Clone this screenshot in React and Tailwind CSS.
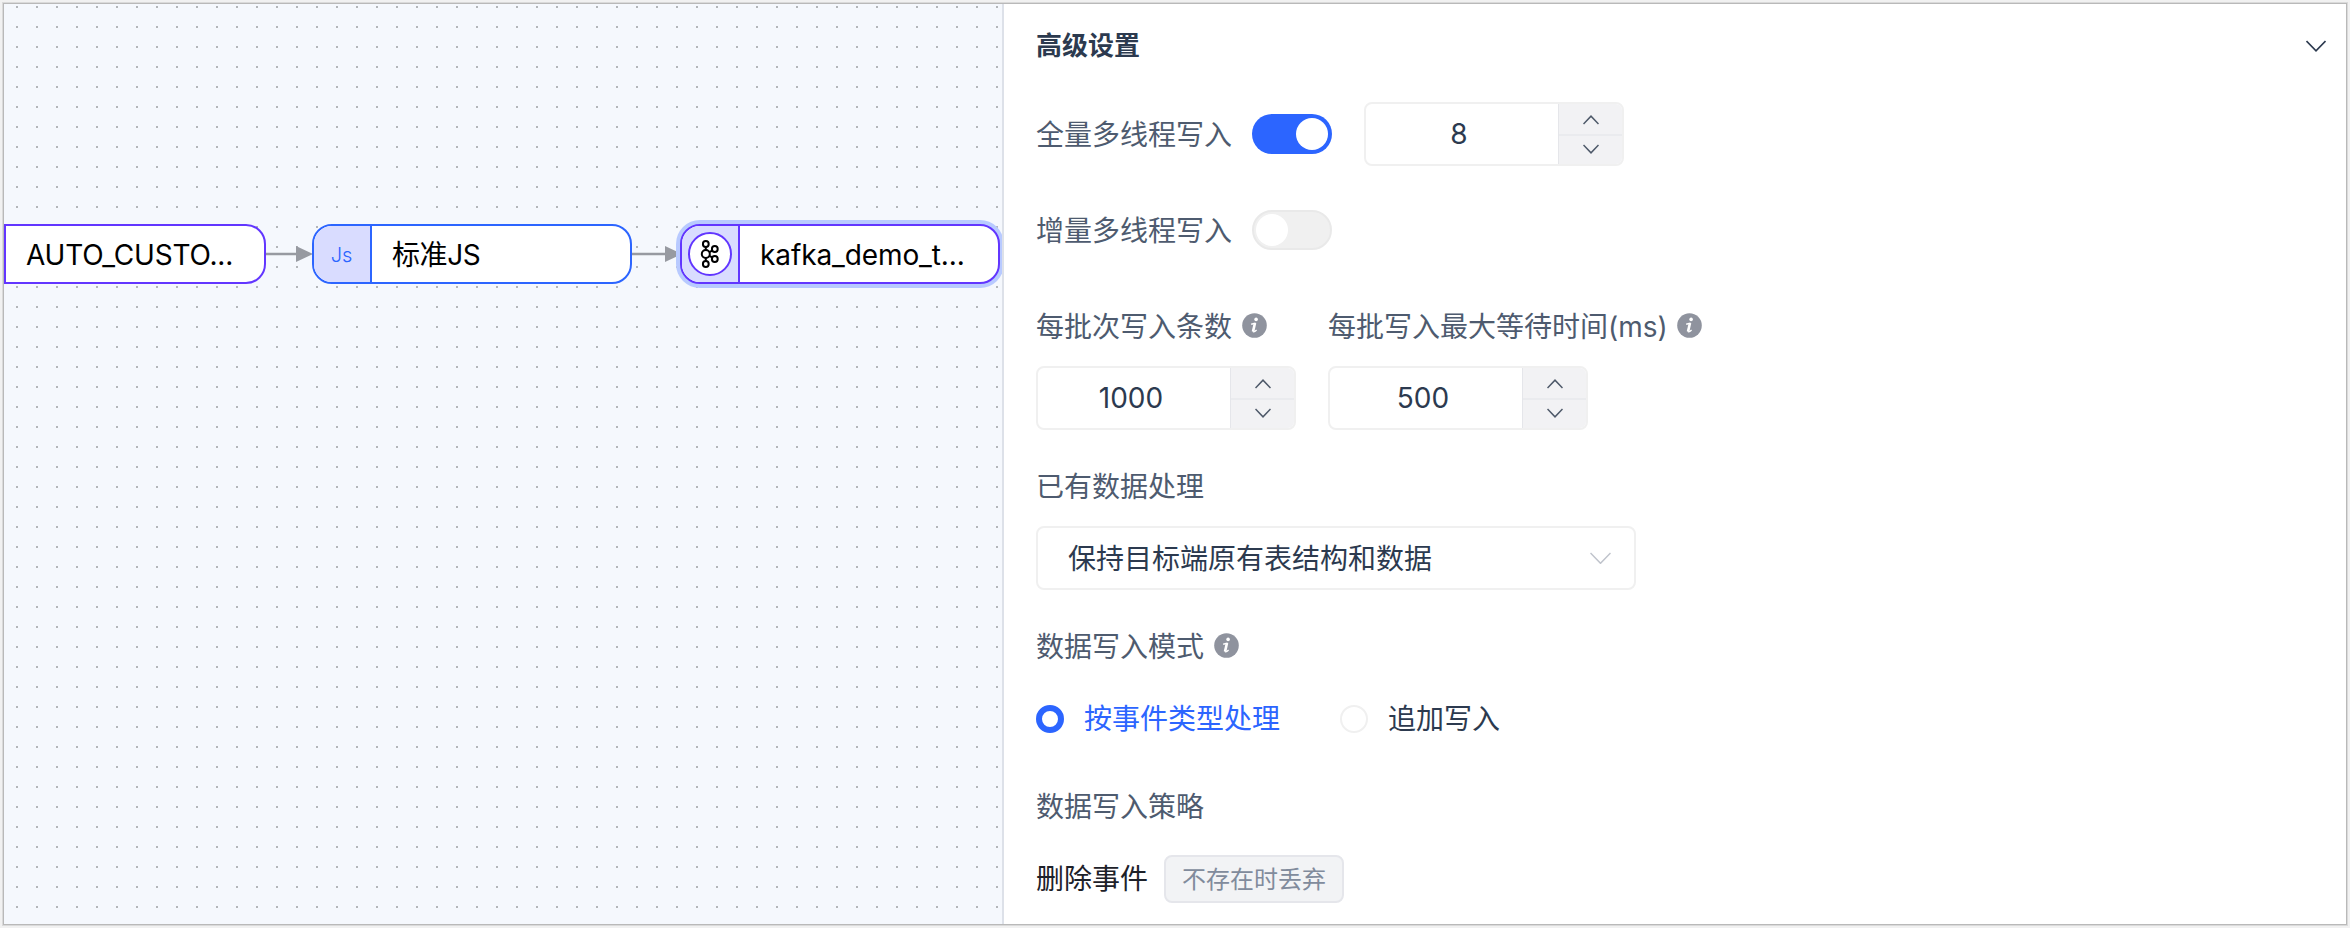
function Chevron({ up, className, w = 16, sw = 1.5 }) {
  return (
    <svg className={className} width={w} height={w / 2 + 2} viewBox={`0 0 ${w} ${w / 2 + 2}`} fill="none" stroke="currentColor" strokeWidth={sw}>
      <path d={up ? `M0.5 ${w / 2 + 1}L${w / 2} 1.2L${w - 0.5} ${w / 2 + 1}` : `M0.5 1L${w / 2} ${w / 2 + 0.8}L${w - 0.5} 1`} />
    </svg>
  );
}

function Info() {
  return (
    <svg className="mb-px ml-[9.5px]" width="25" height="25" viewBox="0 0 25 25">
      <circle cx="12.5" cy="12.5" r="12.3" fill="#8f939e" />
      <circle cx="14.1" cy="6.4" r="1.8" fill="#fff" />
      <path d="M9.2 11.3L13.6 10.1M11.1 18.4Q11.6 19.6 14.6 17" fill="none" stroke="#fff" strokeWidth="1.4" />
      <path d="M13 10L11 18.6" fill="none" stroke="#fff" strokeWidth="2.6" />
    </svg>
  );
}

function NumberInput({ value }) {
  return (
    <div className="flex h-16 w-[260px] overflow-hidden rounded-lg border-2 border-[#f0f0f0] bg-white">
      <div className="flex flex-1 items-center justify-center pr-[6px] text-[#2c3a4f]">{value}</div>
      <div className="flex w-16 flex-col border-l border-[#e5e6ea] bg-[#f2f2f4] text-[#4e5969]">
        <div className="flex flex-1 items-center justify-center border-b-2 border-[#eaebee] pt-[3px]">
          <Chevron up />
        </div>
        <div className="flex flex-1 items-center justify-center pb-[2px]">
          <Chevron />
        </div>
      </div>
    </div>
  );
}

function Kafka() {
  return (
    <svg width="44" height="44" viewBox="0 0 44 44" fill="none">
      <circle cx="22" cy="22" r="21" fill="#fff" stroke="#6236ff" strokeWidth="2" />
      <g stroke="#000" strokeWidth="2">
        <circle cx="17.8" cy="12" r="2.9" />
        <circle cx="17.8" cy="32" r="2.9" />
        <circle cx="26.8" cy="17" r="2.9" />
        <circle cx="26.8" cy="27" r="2.9" />
        <circle cx="17.8" cy="22" r="4" />
        <path d="M17.8 15v3M17.8 26v3M21.4 20.2l2.8-1.6M21.4 23.8l2.8 1.6" />
      </g>
    </svg>
  );
}

function Arrow({ x1, x2 }) {
  const w = x2 - x1;
  return (
    <svg className="absolute top-[241px]" style={{ left: x1 }} width={w} height="18" viewBox={`0 0 ${w} 18`}>
      <path d={`M0 9H${w - 14}`} stroke="#979aa1" strokeWidth="2.6" />
      <path d={`M${w - 17} 1L${w} 9L${w - 17} 17Z`} fill="#979aa1" />
    </svg>
  );
}

function Canvas() {
  return (
    <div className="relative h-full w-[998px] shrink-0 overflow-hidden bg-[#f5f8fd]">
      <svg className="absolute inset-0" width="998" height="920">
        <defs>
          <pattern id="dots" width="20" height="20" patternUnits="userSpaceOnUse">
            <rect x="12" y="2" width="2" height="2" fill="#b3b6ba" />
          </pattern>
        </defs>
        <rect width="998" height="920" fill="url(#dots)" />
      </svg>
      <Arrow x1={262} x2={309} />
      <Arrow x1={628} x2={678} />
      <div className="absolute left-0 top-[220px] flex h-[60px] w-[262px] items-center rounded-r-[20px] border-2 border-[#6236ff] bg-white pl-5">
        <span className="pt-[2px] text-[28px] tracking-[-0.2px]">AUTO_CUSTO...</span>
      </div>
      <div className="absolute left-[308px] top-[220px] flex h-[60px] w-[320px] overflow-hidden rounded-[20px] border-2 border-[#2c65ff] bg-white">
        <div className="flex w-[58px] items-center justify-center border-r-2 border-[#2c65ff] bg-[#d9dcff] pr-px pt-[2px] text-[20px] font-light text-[#2c65ff]">Js</div>
        <span className="flex items-center pl-5 pt-[2px] text-[28px] tracking-[-0.4px]">标准JS</span>
      </div>
      <div className="absolute left-[676px] top-[220px] flex h-[60px] w-[320px] overflow-hidden rounded-[20px] border-2 border-[#6236ff] bg-white shadow-[0_0_0_4px_#b8caff]">
        <div className="flex w-[58px] items-center justify-center border-r-2 border-[#6236ff] bg-[#d9dcff]">
          <Kafka />
        </div>
        <span className="flex items-center pl-5 pt-[2px] text-[28px] tracking-[-0.1px]">kafka_demo_t...</span>
      </div>
    </div>
  );
}

function Settings() {
  return (
    <div className="flex min-w-0 flex-1 flex-col border-l-2 border-[#dde1e9] bg-white pl-8 pr-5 text-[28px] text-[#4e5b6f]">
      <div className="flex h-[84px] items-center justify-between pb-px text-[26px] font-bold text-[#2c3a4f]">
        <span>高级设置</span>
        <Chevron className="text-[#2c3a4f]" w={20} sw={1.6} />
      </div>
      <div className="mt-[14px] flex h-16 items-center">
        <span className="pt-px">全量多线程写入</span>
        <div className="ml-5 mr-8 flex h-10 w-20 items-center justify-end rounded-full bg-[#2c65ff] px-1">
          <div className="size-8 rounded-full bg-white" />
        </div>
        <NumberInput value="8" />
      </div>
      <div className="mt-8 flex h-16 items-center">
        <span className="pt-px">增量多线程写入</span>
        <div className="ml-5 flex h-10 w-20 items-center rounded-full border-2 border-[#e9e9e9] bg-[#f0f0f0] px-[2px]">
          <div className="size-8 rounded-full bg-white" />
        </div>
      </div>
      <div className="mt-8 flex gap-8">
        <div className="w-[260px]">
          <div className="mb-2 flex h-16 items-center whitespace-nowrap"><span className="pt-px">每批次写入条数</span><Info /></div>
          <NumberInput value="1000" />
        </div>
        <div>
          <div className="mb-2 flex h-16 items-center whitespace-nowrap"><span className="pt-px">每批写入最大等待时间(ms)</span><Info /></div>
          <NumberInput value="500" />
        </div>
      </div>
      <div className="mb-2 mt-6 flex h-16 items-center pt-[2px]">已有数据处理</div>
      <div className="flex h-16 w-[600px] items-center justify-between rounded-lg border-2 border-[#f0f0f0] pl-[30px] pr-[23px] text-[#2c3a4f]">
        <span className="pt-px">保持目标端原有表结构和数据</span>
        <Chevron className="text-[#c0c4cc]" w={21} />
      </div>
      <div className="mt-6 flex h-16 items-center"><span className="pt-px">数据写入模式</span><Info /></div>
      <div className="mt-2 flex h-16 items-center pt-[2px]">
        <div className="size-7 rounded-full border-[6px] border-[#2c65ff]" />
        <span className="ml-5 text-[#2c65ff]">按事件类型处理</span>
        <div className="ml-[60px] size-7 rounded-full border-2 border-[#f0f0f0]" />
        <span className="ml-5 text-[#2c3a4f]">追加写入</span>
      </div>
      <div className="mt-6 flex h-16 items-center pt-[2px]">数据写入策略</div>
      <div className="mt-2 flex h-16 items-center pt-[2px] text-[#1d2129]">
        <span>删除事件</span>
        <div className="ml-4 flex h-12 w-[180px] items-center justify-center rounded-lg border-2 border-[#e5e6eb] bg-[#f2f3f5] pt-px text-2xl text-[#818b9c]">不存在时丢弃</div>
      </div>
    </div>
  );
}

export default function App() {
  return (
    <div className="h-[928px] w-[2350px] bg-[#f1f1f1] p-[4px] font-['Inter','Noto_Sans_CJK_SC',sans-serif] text-black">
      <div className="flex h-[920px] w-[2342px] shadow-[0_0_0_1px_#b9b9b9,0_0_0_2px_#dadada]">
        <Canvas />
        <Settings />
      </div>
    </div>
  );
}
